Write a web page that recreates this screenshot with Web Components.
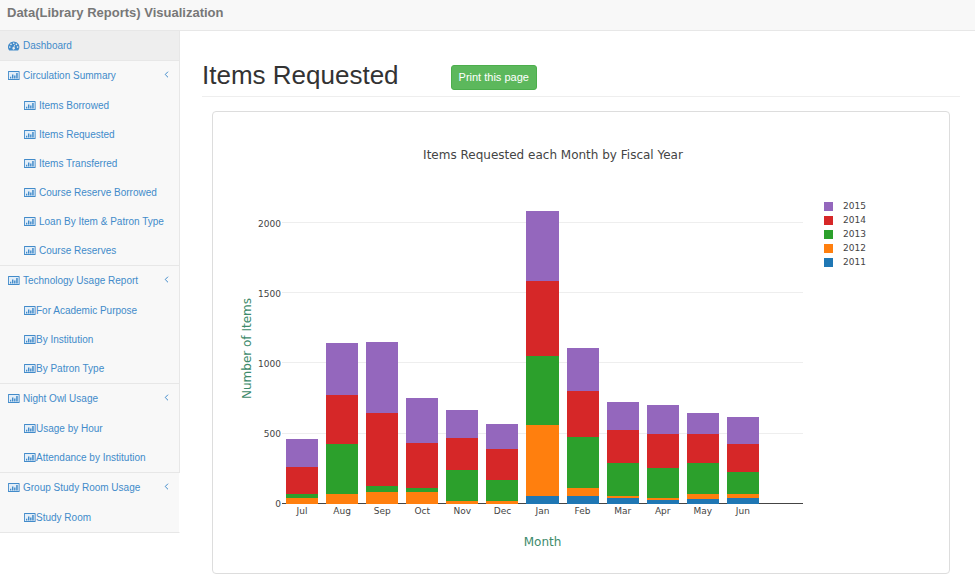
<!DOCTYPE html>
<html lang="en">
<head>
<meta charset="utf-8">
<title>Data(Library Reports) Visualization</title>
<style>
  body { margin: 0; background: #fff; font-family: "Liberation Sans", Arial, sans-serif; font-size: 11px; color: #333; }
</style>
</head>
<body>
<report-app>
  <report-brand slot="header">Data(Library Reports) Visualization</report-brand>
  <side-nav slot="nav">
    <nav-link icon="gauge" active>Dashboard</nav-link>
    <nav-section label="Circulation Summary">
      <nav-link sub spaced>Items Borrowed</nav-link>
      <nav-link sub spaced>Items Requested</nav-link>
      <nav-link sub spaced>Items Transferred</nav-link>
      <nav-link sub spaced>Course Reserve Borrowed</nav-link>
      <nav-link sub spaced>Loan By Item &amp; Patron Type</nav-link>
      <nav-link sub spaced>Course Reserves</nav-link>
    </nav-section>
    <nav-section label="Technology Usage Report">
      <nav-link sub>For Academic Purpose</nav-link>
      <nav-link sub>By Institution</nav-link>
      <nav-link sub>By Patron Type</nav-link>
    </nav-section>
    <nav-section label="Night Owl Usage">
      <nav-link sub>Usage by Hour</nav-link>
      <nav-link sub>Attendance by Institution</nav-link>
    </nav-section>
    <nav-section label="Group Study Room Usage" last>
      <nav-link sub>Study Room</nav-link>
    </nav-section>
  </side-nav>
  <page-heading>Items Requested<span slot="action">Print this page</span></page-heading>
  <content-panel>
    <stacked-chart heading="Items Requested each Month by Fiscal Year" x-title="Month" y-title="Number of Items"></stacked-chart>
  </content-panel>
</report-app>

<script>
const define = (name, html, setup) => customElements.define(name, class extends HTMLElement {
  constructor() {
    super();
    this.attachShadow({ mode: 'open' });
  }
  connectedCallback() {
    this.shadowRoot.innerHTML = html;
    if (setup) setup(this, this.shadowRoot);
  }
});

define('report-app', `
  <style>
    :host { display: block; }
    header { background: #f8f8f8; border-bottom: 1px solid #e7e7e7; }
    .body { display: grid; grid-template-columns: 180px minmax(0, 1fr); align-items: start; }
    main { padding: 28px 15px 10px 22px; }
  </style>
  <header><slot name="header"></slot></header>
  <div class="body"><slot name="nav"></slot><main><slot></slot></main></div>`);

define('report-brand', `
  <style>
    :host { display: block; padding: 3px 7px 7px; }
    a { display: block; font-size: 13px; line-height: 20px; font-weight: bold; color: #777; text-decoration: none; }
  </style>
  <a href="#"><slot></slot></a>`);

define('side-nav', `
  <style>:host { display: block; font-size: 10px; } nav { display: block; }</style>
  <nav aria-label="Reports"><slot></slot></nav>`);

define('report-icon', `
  <style>
    :host { display: block; flex: none; width: 12px; height: 12px; }
    svg { display: block; width: 100%; height: 100%; fill: #428bca; }
  </style>
  <svg viewBox="0 0 12 12" aria-hidden="true"></svg>`, (el, root) => {
  const shapes = {
    chart: '<path fill="#e3eef8" d="M.5 1.500h10.500v8.500H.5z"/><path fill-rule="evenodd" d="M.6 1h10.400a.6.6 0 0 1 .6.6v7.800a.6.6 0 0 1-.6.6H.6a.6.6 0 0 1-.6-.6V1.600A.6.6 0 0 1 .6 1zM.9 1.900v7.200h9.800V1.900z"/><path d="M2 6.700h1.300v1.800H2zM4 4.400h1.400v4.100H4zM6.100 5.600h1.400v2.900H6.100zM8.200 3.100h1.500v5.400H8.200z"/>',
    gauge: '<path fill-rule="evenodd" d="M5.700 1.500a5.600 5.600 0 0 1 4.800 8.600.6.6 0 0 1-.5.300H1.400a.6.6 0 0 1-.5-.3A5.600 5.600 0 0 1 5.700 1.500zM1.800 6.300a.8.8 0 1 0 0 1.600.8.8 0 0 0 0-1.600zM3 3.600a.8.8 0 1 0 0 1.600.8.8 0 0 0 0-1.600zM5.700 2.400a.8.8 0 1 0 0 1.600.8.8 0 0 0 0-1.600zM8.400 3.600a.8.8 0 1 0 0 1.600.8.8 0 0 0 0-1.600zM9.600 6.300a.8.8 0 1 0 0 1.600.8.8 0 0 0 0-1.600zM6.200 4.800l-.6 2.300a1.200 1.200 0 1 0 .7.200l.6-2.300z"/>'
  };
  root.querySelector('svg').innerHTML = shapes[el.getAttribute('name')] || shapes.chart;
});

define('nav-link', `
  <style>
    :host { display: block; }
    a { display: flex; align-items: center; gap: 3px; padding-left: 8px; line-height: 29px; color: #428bca; text-decoration: none; white-space: nowrap; }
    :host([sub]) a { padding-left: 24px; gap: 0; }
    :host([sub][spaced]) a { gap: 3px; }
    :host([active]) { border-bottom: 1px solid #e7e7e7; border-right: 1px solid #e7e7e7; background: #eee; }
  </style>
  <a href="#"><slot></slot></a>`, (el, root) => {
  const icon = document.createElement('report-icon');
  icon.setAttribute('name', el.getAttribute('icon') || 'chart');
  root.querySelector('a').prepend(icon);
});

define('nav-section', `
  <style>
    :host { display: block; background: #f8f8f8; background-clip: padding-box; border-bottom: 1px solid #e7e7e7; border-right: 1px solid #e7e7e7; }
    :host([last]) { border-right-color: transparent; }
    a { display: flex; align-items: center; gap: 3px; padding: 0 10px 0 8px; line-height: 30px; color: #428bca; text-decoration: none; white-space: nowrap; }
    .arrow { flex: none; width: 5px; height: 7px; margin: 0 0 4px auto; fill: none; stroke: #428bca; }
  </style>
  <a href="#"><report-icon name="chart"></report-icon><span></span>
    <svg class="arrow" viewBox="0 0 5 7" aria-hidden="true"><path d="M4 .7 1.200 3.500 4 6.300"/></svg></a>
  <slot></slot>`, (el, root) => {
  root.querySelector('span').textContent = el.getAttribute('label');
});

define('page-heading', `
  <style>
    :host { display: flex; align-items: center; gap: 52px; padding-bottom: 4px; margin-bottom: 14px; border-bottom: 1px solid #eee; }
    h1 { margin: 0; font-size: 26px; line-height: 33px; font-weight: 400; color: #333; }
    button { margin: 4px 0 0; padding: 0 7px; font: inherit; line-height: 23px; color: #fff; background: #5cb85c; border: 1px solid #4cae4c; border-radius: 3px; }
  </style>
  <h1><slot></slot></h1><button type="button"><slot name="action"></slot></button>`);

define('content-panel', `
  <style>
    :host { display: block; margin: 0 10px; padding: 33px 69px 23px 13px; border: 1px solid #ddd; border-radius: 4px; }
  </style>
  <slot></slot>`);

const series = [['2015', '#9467bd'], ['2014', '#d62728'], ['2013', '#2ca02c'], ['2012', '#ff7f0e'], ['2011', '#1f77b4']];
// Each row: month, then its counts in the order of the series.
const months = [
  ['Jul', 200, 192, 31, 40, 0],
  ['Aug', 371, 347, 356, 71, 0],
  ['Sep', 506, 516, 45, 83, 0],
  ['Oct', 321, 314, 28, 88, 0],
  ['Nov', 198, 228, 221, 18, 0],
  ['Dec', 173, 221, 155, 18, 0],
  ['Jan', 497, 533, 494, 499, 59],
  ['Feb', 304, 328, 357, 57, 59],
  ['Mar', 200, 233, 231, 19, 40],
  ['Apr', 203, 246, 209, 14, 31],
  ['May', 152, 207, 214, 41, 33],
  ['Jun', 190, 197, 155, 34, 40]
];
const axisMax = 2200;
const ticks = [2000, 1500, 1000, 500];

define('chart-legend', `
  <style>
    :host { display: block; }
    ul { margin: 0; padding: 0; list-style: none; }
    li { display: flex; align-items: center; gap: 10px; line-height: 14px; }
    i { width: 9px; height: 9px; }
  </style>
  <ul></ul>`, (el, root) => {
  root.querySelector('ul').innerHTML = series.map(([year, color]) =>
    `<li><i style="background:${color}"></i>${year}</li>`).join('');
});

define('stacked-chart', `
  <style>
    :host { display: block; font-family: Verdana, "DejaVu Sans", sans-serif; font-size: 9px; color: #444; }
    h2 { margin: 0 0 29px; font-size: 12px; line-height: 20px; font-weight: 400; text-align: center; }
    .chart { display: grid; grid-template-columns: 28px 28px minmax(0, 1fr) 77px; grid-template-rows: 310px auto auto; }
    .title { font-size: 12px; color: #3d8a6b; text-align: center; }
    .y-title { writing-mode: vertical-rl; transform: rotate(180deg); justify-self: center; line-height: 14px; margin-left: 14px; }
    .scale { display: flex; flex-direction: column; text-align: right; line-height: 0; padding: 2px 1px 0 0; }
    .scale :first-child, .grid :first-child { flex: 200 0 0; }
    .tick, .line { flex: 500 0 0; }
    .plot { grid-column: 3; display: grid; }
    .grid, .bars { grid-area: 1 / 1; }
    .grid { display: flex; flex-direction: column; border-bottom: 1px solid #444; }
    .line { box-sizing: border-box; border-top: 1px solid #eee; }
    .bars, .months { display: grid; grid-template-columns: repeat(13, minmax(0, 1fr)); }
    .bar { display: flex; flex-direction: column; justify-content: flex-end; padding: 0 10%; }
    .months { grid-column: 3; line-height: 14px; text-align: center; }
    .x-title { grid-column: 3; line-height: 16px; margin-top: 16px; }
    chart-legend { grid-column: 4; grid-row: 1; padding: 5px 0 0 21px; }
  </style>
  <h2></h2>
  <div class="chart">
    <div class="title y-title"></div>
    <div class="scale"></div>
    <div class="plot"><div class="grid"></div><div class="bars"></div></div>
    <chart-legend></chart-legend>
    <div class="months"></div>
    <div class="title x-title"></div>
  </div>`, (el, root) => {
  const $ = s => root.querySelector(s);
  $('h2').textContent = el.getAttribute('heading');
  $('.y-title').textContent = el.getAttribute('y-title');
  $('.x-title').textContent = el.getAttribute('x-title');
  $('.scale').innerHTML = '<div></div>' + ticks.map(t => `<div class="tick">${t}</div>`).join('') + '<div>0</div>';
  $('.grid').innerHTML = '<div></div>' + ticks.map(() => '<div class="line"></div>').join('');
  $('.bars').innerHTML = months.map(([, ...values]) => '<div class="bar">' + values.map((v, i) =>
    `<div style="height:${v / axisMax * 100}%;background:${series[i][1]}"></div>`).join('') + '</div>').join('');
  $('.months').innerHTML = months.map(([m]) => `<div>${m}</div>`).join('');
});
</script>
</body>
</html>
